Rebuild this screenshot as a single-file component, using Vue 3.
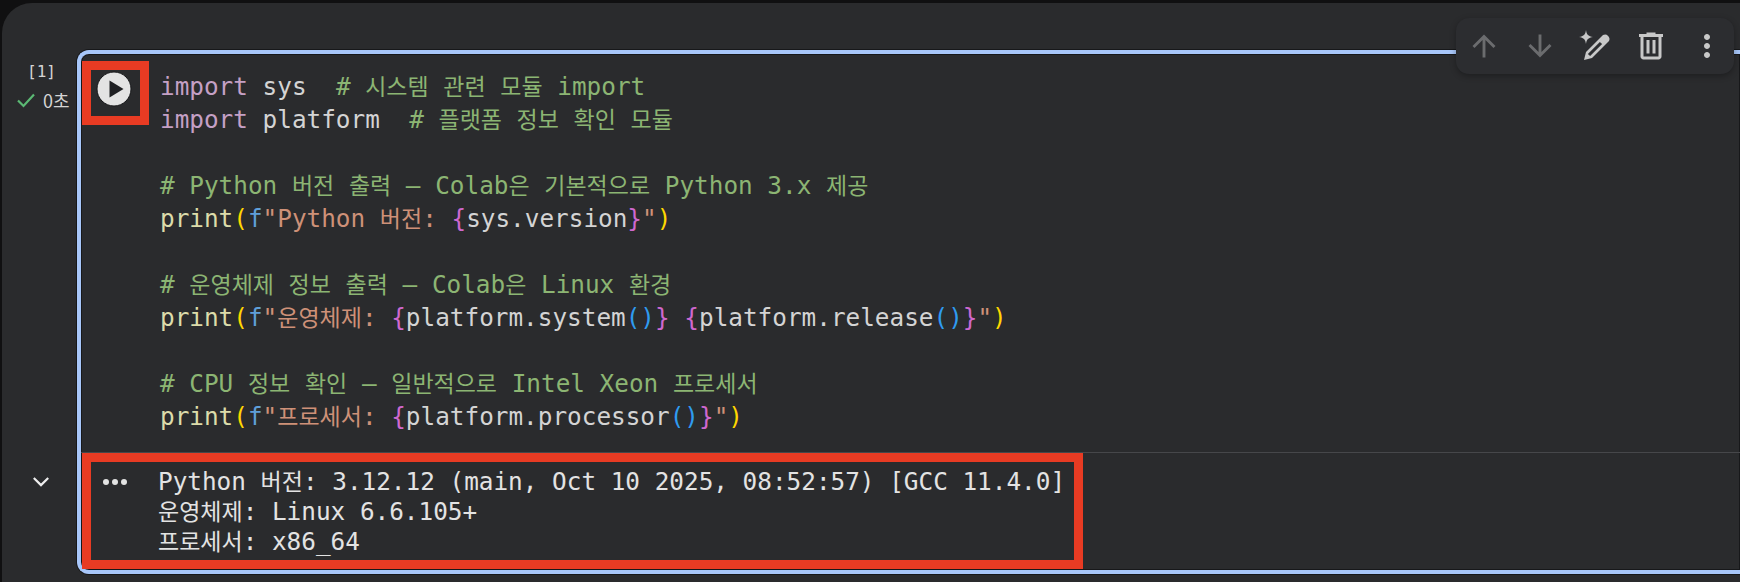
<script setup>
const code = [
  [['k', 'import'], ['t', ' sys  '], ['c', '# 시스템 관련 모듈 import']],
  [['k', 'import'], ['t', ' platform  '], ['c', '# 플랫폼 정보 확인 모듈']],
  [],
  [['c', '# Python 버전 출력 – Colab은 기본적으로 Python 3.x 제공']],
  [['fn', 'print'], ['p', '('], ['f', 'f'], ['s', '"Python 버전: '], ['b', '{'], ['t', 'sys.version'], ['b', '}'], ['s', '"'], ['p', ')']],
  [],
  [['c', '# 운영체제 정보 출력 – Colab은 Linux 환경']],
  [['fn', 'print'], ['p', '('], ['f', 'f'], ['s', '"운영체제: '], ['b', '{'], ['t', 'platform.system'], ['q', '()'], ['b', '}'], ['s', ' '], ['b', '{'], ['t', 'platform.release'], ['q', '()'], ['b', '}'], ['s', '"'], ['p', ')']],
  [],
  [['c', '# CPU 정보 확인 – 일반적으로 Intel Xeon 프로세서']],
  [['fn', 'print'], ['p', '('], ['f', 'f'], ['s', '"프로세서: '], ['b', '{'], ['t', 'platform.processor'], ['q', '()'], ['b', '}'], ['s', '"'], ['p', ')']],
]
const output = [
  'Python 버전: 3.12.12 (main, Oct 10 2025, 08:52:57) [GCC 11.4.0]',
  '운영체제: Linux 6.6.105+',
  '프로세서: x86_64',
]
const runs = (text) =>
  text.split(/([\uAC00-\uD7A3]+)/).filter(Boolean).map((part) => ({
    part,
    ko: /[\uAC00-\uD7A3]/.test(part),
  }))
</script>

<template>
  <div class="page">
    <div class="panel">
      <div class="gutter">
        <div class="gutter-top">
          <div class="count">[1]</div>
          <div class="status">
            <svg class="check" viewBox="0 0 20 20"><path d="M2 10.5 7.5 16 18 4.5" /></svg>
            <span>0초</span>
          </div>
        </div>
        <svg class="chevron" viewBox="0 0 20 12"><path d="M2 2 10 10 18 2" /></svg>
      </div>

      <div class="cell">
        <div class="code-row">
          <div class="run-col">
            <svg class="play" viewBox="0 0 36 36">
              <circle cx="18" cy="18" r="17" />
              <path d="M13.500 9.500 27.500 18 13.500 26.500Z" />
            </svg>
          </div>
          <pre class="code"><div v-for="(line, i) in code" :key="i" class="line"><span v-for="(tok, j) in line" :key="j" :class="tok[0]"><span v-for="(r, k) in runs(tok[1])" :key="k" :class="{ ko: r.ko }">{{ r.part }}</span></span></div></pre>
        </div>
        <div class="output-row">
          <div class="dots"><i></i><i></i><i></i></div>
          <pre class="output"><div v-for="line in output" :key="line" class="out-line"><span v-for="(r, k) in runs(line)" :key="k" :class="{ ko: r.ko }">{{ r.part }}</span></div></pre>
        </div>
      </div>

      <div class="toolbar">
        <svg class="icon dim" viewBox="-0.5 -0.5 25 25"><path d="M4 12l1.41 1.41L11 7.83V20h2V7.83l5.58 5.59L20 12l-8-8-8 8z" /></svg>
        <svg class="icon dim" viewBox="-0.5 -0.5 25 25"><path d="M20 12l-1.41-1.41L13 16.17V4h-2v12.17l-5.58-5.59L4 12l8 8 8-8z" /></svg>
        <svg class="icon" viewBox="0 0 36 36">
          <path d="M8 2c.6 4.500 2.200 6.200 7 7-4.800.8-6.400 2.500-7 7-.6-4.500-2.200-6.200-7-7 4.800-.8 6.400-2.500 7-7z" />
          <path d="M6 32 8 24 25 7A4.500 4.500 0 0 1 31 13L14 30ZM9.900 25.900 21.900 13.900 24.100 16.100 12.100 28.100Z" fill-rule="evenodd" />
        </svg>
        <svg class="icon" viewBox="0 0 24 24"><path d="M15 4V3H9v1H4v2h1v13c0 1.100.9 2 2 2h10c1.100 0 2-.9 2-2V6h1V4h-5zm2 15H7V6h10v13zM9 8h2v9H9zm4 0h2v9h-2z" /></svg>
        <svg class="icon" viewBox="0 0 24 24"><path d="M12 8c1.100 0 2-.9 2-2s-.9-2-2-2-2 .9-2 2 .9 2 2 2zm0 2c-1.100 0-2 .9-2 2s.9 2 2 2 2-.9 2-2-.9-2-2-2zm0 6c-1.100 0-2 .9-2 2s.9 2 2 2 2-.9 2-2-.9-2-2-2z" /></svg>
      </div>

      <div class="mark mark-run"></div>
      <div class="mark mark-output"></div>
    </div>
  </div>
</template>

<style scoped>
.page {
  width: 1740px;
  height: 582px;
  overflow: hidden;
  background: #101011;
  padding: 3px 0 0 2px;
  box-sizing: border-box;
}
.panel {
  position: relative;
  display: flex;
  height: 579px;
  background: #2a2b2d;
  border-top-left-radius: 30px;
  padding-top: 47px;
  box-sizing: border-box;
}
.gutter {
  width: 75px;
  flex: none;
  display: flex;
  flex-direction: column;
  align-items: center;
}
.gutter-top {
  height: 410px;
  width: 100%;
  color: #d4d4d4;
}
.count {
  font: 16px/20px "DejaVu Sans Mono", monospace;
  text-align: center;
  margin: 12px 0 0 4px;
}
.status {
  display: flex;
  align-items: center;
  gap: 7px;
  margin: 7px 0 0 14px;
  font: 18px/22px "Noto Sans CJK KR", sans-serif;
}
.check {
  width: 20px;
  height: 20px;
  flex: none;
  fill: none;
  stroke: #5bb974;
  stroke-width: 2.200;
}
.chevron {
  width: 18px;
  height: 11px;
  margin: 16px 0 0 3px;
  fill: none;
  stroke: #eeeeee;
  stroke-width: 2.400;
}
.cell {
  flex: 1;
  min-width: 0;
  height: 524px;
  border: solid #a8c7fa;
  border-width: 4px 0 4px 4px;
  border-radius: 12px 0 0 12px;
  box-sizing: border-box;
  display: flex;
  flex-direction: column;
  box-shadow: inset 0 0 0 1px #17181a, 0 0 0 1px #17181a;
}
.code-row {
  display: flex;
  height: 399px;
  padding-top: 15px;
  box-sizing: border-box;
  border-bottom: 1px solid #46474a;
}
.run-col {
  width: 79px;
  flex: none;
}
.play {
  display: block;
  width: 36px;
  height: 36px;
  margin: 2px 0 0 15px;
}
.play circle {
  fill: #e3e3e3;
  stroke: #17181a;
  stroke-width: 1;
}
.play path {
  fill: #1f2023;
}
.code,
.output {
  margin: 0;
  font-family: "DejaVu Sans Mono", "Noto Sans CJK KR", monospace;
  font-size: 24.35px;
  white-space: pre;
}
.ko {
  font-family: "Noto Sans CJK KR", sans-serif;
  font-size: 23px;
}
.code {
  line-height: 33px;
  color: #d4d4d4;
}
.line {
  height: 33px;
}
.k { color: #c5a0c5; }
.t { color: #d4d4d4; }
.c { color: #8cb573; }
.fn { color: #dcdcaa; }
.p { color: #ffd700; }
.f { color: #5f9fd9; }
.s { color: #ce9178; }
.b { color: #cf68cf; }
.q { color: #2f9bf0; }
.output-row {
  display: flex;
  padding-top: 12px;
}
.dots {
  width: 77px;
  flex: none;
  display: flex;
  gap: 3px;
  padding: 14px 0 0 22px;
  box-sizing: border-box;
}
.dots i {
  width: 6px;
  height: 6px;
  border-radius: 50%;
  background: #e3e3e3;
}
.output {
  line-height: 30px;
  color: #e3e3e3;
}
.out-line {
  height: 30px;
}
.toolbar {
  position: absolute;
  left: 1454px;
  top: 15px;
  width: 278px;
  height: 56px;
  padding: 0 9px 0 10px;
  box-sizing: border-box;
  display: flex;
  align-items: center;
  justify-content: space-between;
  background: #2c2d30;
  border-radius: 13px;
  box-shadow: 0 2px 6px rgba(0, 0, 0, 0.3);
}
.icon {
  width: 36px;
  height: 36px;
  fill: #c8c8c8;
}
.icon.dim {
  fill: #6b6c6e;
}
.mark {
  position: absolute;
  border: 9px solid #e83b23;
  box-sizing: border-box;
}
.mark-run {
  left: 80px;
  top: 58px;
  width: 67px;
  height: 64px;
}
.mark-output {
  left: 80px;
  top: 450px;
  width: 1001px;
  height: 116px;
}
</style>
